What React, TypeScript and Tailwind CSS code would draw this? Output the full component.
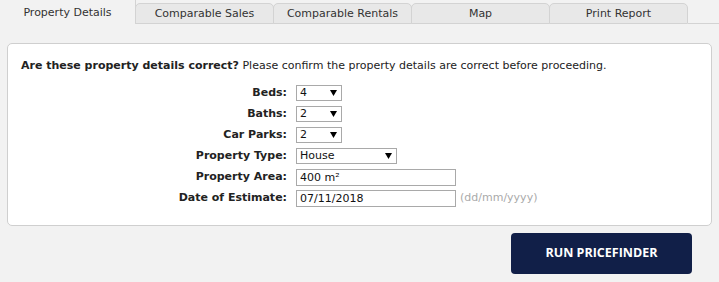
import { useState } from 'react';

const tabs = ['Comparable Sales', 'Comparable Rentals', 'Map', 'Print Report'];

function Select({ value, options, width, onChange }: { value: string; options: string[]; width: string; onChange: (v: string) => void }) {
  return (
    <div className={`relative ${width}`}>
      <select
        value={value}
        onChange={(e) => onChange(e.target.value)}
        className="w-full h-[16px] appearance-none border border-[#a9a9a9] bg-white pl-[3px] pr-4 text-[11px] leading-[14px] text-[#111] outline-none"
      >
        {options.map((o) => (
          <option key={o}>{o}</option>
        ))}
      </select>
      <svg className="pointer-events-none absolute right-[5px] top-[5px]" width="7" height="6" viewBox="0 0 7 6">
        <path d="M0 0h7L3.5 6z" fill="#000" />
      </svg>
    </div>
  );
}

function Row({ label, children }: { label: string; children: React.ReactNode }) {
  return (
    <div className="flex h-[21px] items-center">
      <label className="w-[266px] text-right font-bold text-[#222]">{label}</label>
      <div className="ml-[9px] flex items-center">{children}</div>
    </div>
  );
}

export default function App() {
  const [beds, setBeds] = useState('4');
  const [baths, setBaths] = useState('2');
  const [cars, setCars] = useState('2');
  const [type, setType] = useState('House');
  const [area, setArea] = useState('400 m²');
  const [date, setDate] = useState('07/11/2018');

  const nums = ['1', '2', '3', '4', '5', '6'];

  return (
    <div className="h-[282px] w-[719px] bg-[#f2f2f2] text-[11px] text-[#222]" style={{ fontFamily: '"DejaVu Sans", Verdana, sans-serif' }}>
      {/* Tabs */}
      <div className="flex h-[24px] items-end">
        <div className="flex h-[24px] w-[136px] items-center justify-center border-r border-[#d3d3d3] pt-[3px] text-[#333] first-letter:text-[#3b4b9c]">
          Property Details
        </div>
        {tabs.map((t) => (
          <div
            key={t}
            className="-ml-px flex h-[21px] w-[139px] items-center justify-center rounded-t-[5px] border border-[#d3d3d3] bg-[#e8e8e8] pt-px text-[#333] first-letter:text-[#3b4b9c]"
          >
            {t}
          </div>
        ))}
        <div className="flex-1 border-b border-[#d3d3d3]" />
      </div>

      {/* Panel */}
      <div className="mx-[7px] mt-[19px] rounded-[5px] border border-[#cfcfcf] bg-white pl-[13px] pt-[15px] pb-[16px]">
        <p className="leading-[14px]">
          <span className="font-bold">Are these property details correct?</span> Please confirm the property details are correct before proceeding.
        </p>
        <div className="mt-[10px]">
          <Row label="Beds:">
            <Select value={beds} options={nums} width="w-[46px]" onChange={setBeds} />
          </Row>
          <Row label="Baths:">
            <Select value={baths} options={nums} width="w-[46px]" onChange={setBaths} />
          </Row>
          <Row label="Car Parks:">
            <Select value={cars} options={nums} width="w-[46px]" onChange={setCars} />
          </Row>
          <Row label="Property Type:">
            <Select value={type} options={['House', 'Unit', 'Townhouse', 'Land']} width="w-[101px]" onChange={setType} />
          </Row>
          <Row label="Property Area:">
            <input
              value={area}
              onChange={(e) => setArea(e.target.value)}
              className="h-[17px] w-[160px] border border-[#a9a9a9] bg-white px-[3px] text-[11px] text-[#111] outline-none"
            />
          </Row>
          <Row label="Date of Estimate:">
            <input
              value={date}
              onChange={(e) => setDate(e.target.value)}
              className="h-[17px] w-[160px] border border-[#a9a9a9] bg-white px-[3px] text-[11px] text-[#111] outline-none"
            />
            <span className="ml-[4px] text-[#aaa]">(dd/mm/yyyy)</span>
          </Row>
        </div>
      </div>

      {/* Action */}
      <div className="flex justify-end pr-[27px] pt-[7px]">
        <button
          className="h-[41px] w-[181px] rounded-[4px] bg-[#111f48] text-[12.5px] font-bold text-white"
          style={{ fontFamily: '"Open Sans", sans-serif' }}
        >
          RUN PRICEFINDER
        </button>
      </div>
    </div>
  );
}
